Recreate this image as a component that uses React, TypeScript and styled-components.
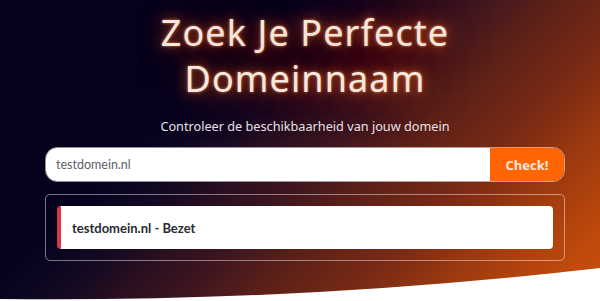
import * as React from "react";
import styled, {createGlobalStyle} from "styled-components";

const GlobalStyle = createGlobalStyle`
	html, body {
		margin: 0;
		padding: 0;
		background: #ffffff;
	}
	* {
		box-sizing: border-box;
	}
`

const Hero = styled.section`
	position: relative;
	width: 600px;
	height: 301px;
	overflow: hidden;
	display: flex;
	flex-direction: column;
	align-items: center;
	padding: 10px 0 0 10px;
	background: linear-gradient(135deg, #04021a 0%, #06031f 32%, #170a22 41%, #2a0f20 46%, #3a1420 52%, #5a2018 61%, #7a2a14 72%, #a63e0e 84%, #c04a0c 93%, #c84e0c 100%);
`

const Title = styled.h1`
	margin: 0;
	font-family: "Noto Sans", sans-serif;
	font-weight: 400;
	font-size: 36px;
	line-height: 46px;
	letter-spacing: 1.1px;
	text-align: center;
	color: #f6e9e2;
	text-shadow: 0 0 3px rgba(255, 150, 80, 0.8), 0 0 12px rgba(255, 100, 30, 0.65), 0 0 26px rgba(220, 80, 20, 0.6), 0 0 48px rgba(200, 70, 20, 0.5);
`

const Subtitle = styled.p`
	margin: 15px 0 0;
	font-family: "Noto Sans", sans-serif;
	font-size: 12.7px;
	line-height: 18px;
	color: #e6e0e6;
`

const SearchForm = styled.form`
	display: flex;
	width: 520px;
	height: 35px;
	margin-top: 12px;
	border-radius: 12px;
	border: 1px solid rgba(255, 255, 255, 0.55);
	overflow: hidden;
`

const DomainInput = styled.input`
	flex: 1;
	border: none;
	outline: none;
	background: #ffffff;
	padding: 0 10px;
	font-family: "Lato", sans-serif;
	font-size: 12.5px;
	color: #5e606c;
`

const CheckButton = styled.button`
	width: 74px;
	border: none;
	background: #ff6505;
	color: #fbe9dc;
	font-family: "Open Sans", sans-serif;
	font-weight: 700;
	font-size: 13px;
	cursor: pointer;
`

const ResultPanel = styled.div`
	width: 520px;
	margin-top: 12px;
	padding: 11px;
	border: 1px solid rgba(255, 255, 255, 0.45);
	border-radius: 5px;
`

const ResultCard = styled.div<{ $accent: string }>`
	height: 43px;
	display: flex;
	align-items: center;
	padding-left: 11px;
	background: #ffffff;
	border-left: 4px solid ${(props) => props.$accent};
	border-radius: 4px;
	font-family: "Lato", sans-serif;
	font-weight: 700;
	font-size: 13px;
	color: #2a2a30;
`

const Wave = styled.svg`
	position: absolute;
	left: 0;
	bottom: 0;
	width: 600px;
	height: 40px;
`

const App = () => {
	const [domain, setDomain] = React.useState("testdomein.nl")

	return (
		<>
			<GlobalStyle />
			<Hero>
				<Title>
					Zoek Je Perfecte<br />Domeinnaam
				</Title>
				<Subtitle>Controleer de beschikbaarheid van jouw domein</Subtitle>
				<SearchForm onSubmit={(e) => e.preventDefault()}>
					<DomainInput value={domain} onChange={(e) => setDomain(e.target.value)} />
					<CheckButton type="submit">Check!</CheckButton>
				</SearchForm>
				<ResultPanel>
					<ResultCard $accent="#dc3545">testdomein.nl - Bezet</ResultCard>
				</ResultPanel>
				<Wave viewBox="0 0 600 40" preserveAspectRatio="none">
					<path d="M0 38 Q 300 41.5 600 7 L600 40 L0 40 Z" fill="#ffffff" />
				</Wave>
			</Hero>
		</>
	)
}

export default App;
